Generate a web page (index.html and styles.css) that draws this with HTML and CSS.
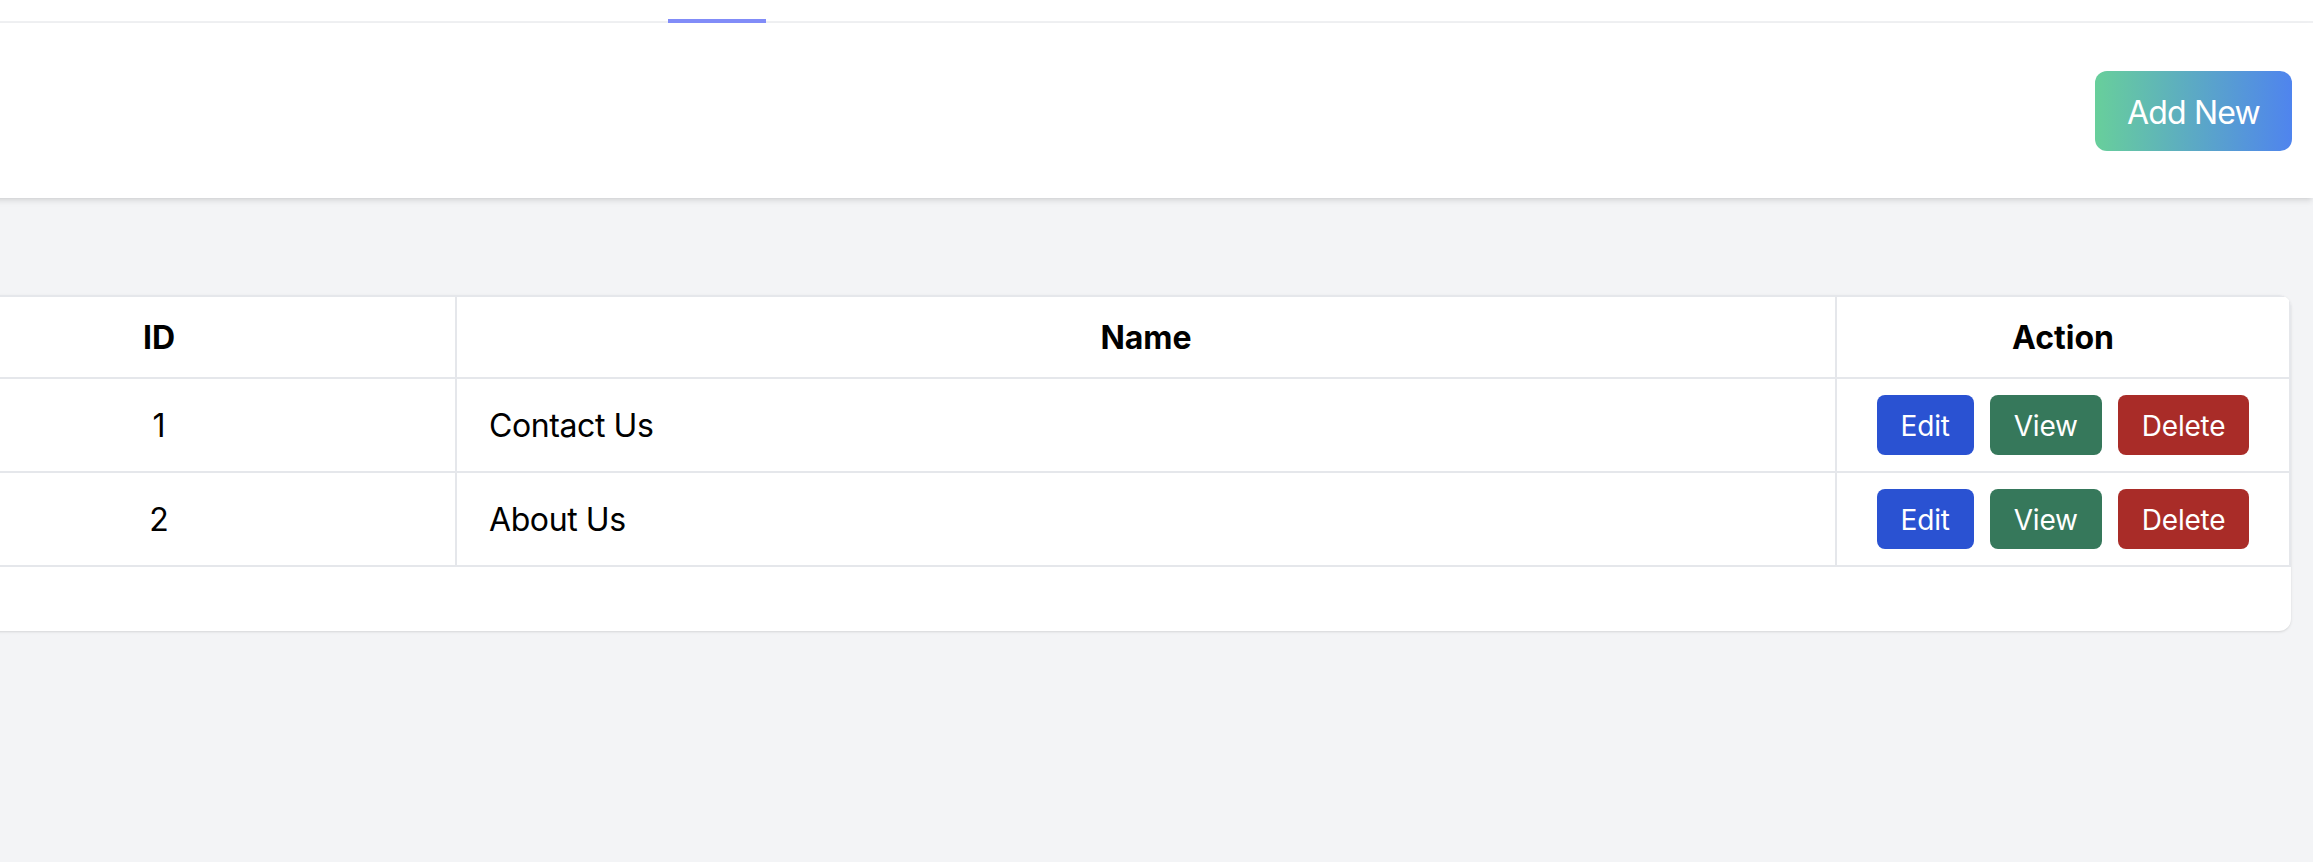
FILE: index.html
```html
<!DOCTYPE html>
<html lang="en">
<head>
<meta charset="utf-8">
<title>Pages</title>
<link rel="stylesheet" href="styles.css">
</head>
<body>
<div class="page">
  <nav class="tabs">
    <a class="tab tab-active" href="#"></a>
  </nav>
  <header class="toolbar">
    <button class="btn-add" type="button">Add New</button>
  </header>
  <main class="content">
    <div class="card">
      <table class="data-table">
        <colgroup>
          <col class="col-id">
          <col class="col-name">
          <col class="col-action">
        </colgroup>
        <thead>
          <tr>
            <th>ID</th>
            <th>Name</th>
            <th>Action</th>
          </tr>
        </thead>
        <tbody>
          <tr>
            <td class="cell-id">1</td>
            <td class="cell-name">Contact Us</td>
            <td class="cell-action">
              <div class="actions">
                <button class="btn btn-edit" type="button">Edit</button>
                <button class="btn btn-view" type="button">View</button>
                <button class="btn btn-delete" type="button">Delete</button>
              </div>
            </td>
          </tr>
          <tr>
            <td class="cell-id">2</td>
            <td class="cell-name">About Us</td>
            <td class="cell-action">
              <div class="actions">
                <button class="btn btn-edit" type="button">Edit</button>
                <button class="btn btn-view" type="button">View</button>
                <button class="btn btn-delete" type="button">Delete</button>
              </div>
            </td>
          </tr>
        </tbody>
      </table>
    </div>
  </main>
</div>
</body>
</html>
```

FILE: styles.css
```css
* {
  box-sizing: border-box;
}

html, body {
  margin: 0;
  padding: 0;
}

body {
  background: #f3f4f6;
  font-family: Inter, "Noto Sans", "Liberation Sans", sans-serif;
  color: #000;
  overflow: hidden;
  height: 862px;
}

.page {
  margin-left: -161px;
  width: 2474px;
}

/* top tab strip */
.tabs {
  display: flex;
  height: 23px;
  background: #fff;
  border-bottom: 2px solid #eff0f2;
  padding-left: 829px;
}

.tab {
  display: block;
  width: 98px;
  height: 23px;
  text-decoration: none;
}

.tab-active {
  border-bottom: 4px solid #818cf8;
}

/* header with add button */
.toolbar {
  display: flex;
  justify-content: flex-end;
  align-items: center;
  height: 175px;
  padding: 0 21px;
  background: #fff;
  box-shadow: 0 4px 6px -1px rgba(0, 0, 0, 0.1), 0 2px 4px -2px rgba(0, 0, 0, 0.08);
}

.btn-add {
  font-family: inherit;
  font-size: 32px;
  line-height: 48px;
  font-weight: 400;
  letter-spacing: -0.8px;
  color: #fff;
  border: none;
  border-radius: 12px;
  padding: 18px 32px 14px;
  background: linear-gradient(to right, #68cf9b, #4f84ee);
  cursor: pointer;
}

/* content */
.content {
  padding: 97px 22px 0 22px;
}

.card {
  background: #fff;
  border-radius: 12px;
  overflow: hidden;
  padding-bottom: 64px;
  box-shadow: 0 1px 3px rgba(0, 0, 0, 0.1), 0 1px 2px -1px rgba(0, 0, 0, 0.1);
}

.data-table {
  width: 100%;
  table-layout: fixed;
  border-collapse: collapse;
  font-size: 32px;
  line-height: 48px;
}

.col-id {
  width: 594px;
}

.col-action {
  width: 454px;
}

.data-table th,
.data-table td {
  border: 2px solid #e5e7eb;
  padding: 17px 32px 15px;
  vertical-align: middle;
}

.data-table th {
  font-weight: 700;
  text-align: center;
}

.cell-id {
  text-align: center;
}

.cell-name {
  text-align: left;
  letter-spacing: -0.4px;
}

.cell-action {
  text-align: center;
}

.data-table td.cell-action {
  padding: 16px 32px;
}

.actions {
  display: flex;
  justify-content: center;
  gap: 16px;
}

.btn {
  font-family: inherit;
  font-size: 28px;
  line-height: 40px;
  font-weight: 400;
  letter-spacing: -0.2px;
  color: #fff;
  border: none;
  border-radius: 8px;
  padding: 11px 24px 9px;
  cursor: pointer;
}

.btn-edit {
  background: #2a52d2;
}

.btn-view {
  background: #36785b;
}

.btn-delete {
  background: #a92c28;
}
```
